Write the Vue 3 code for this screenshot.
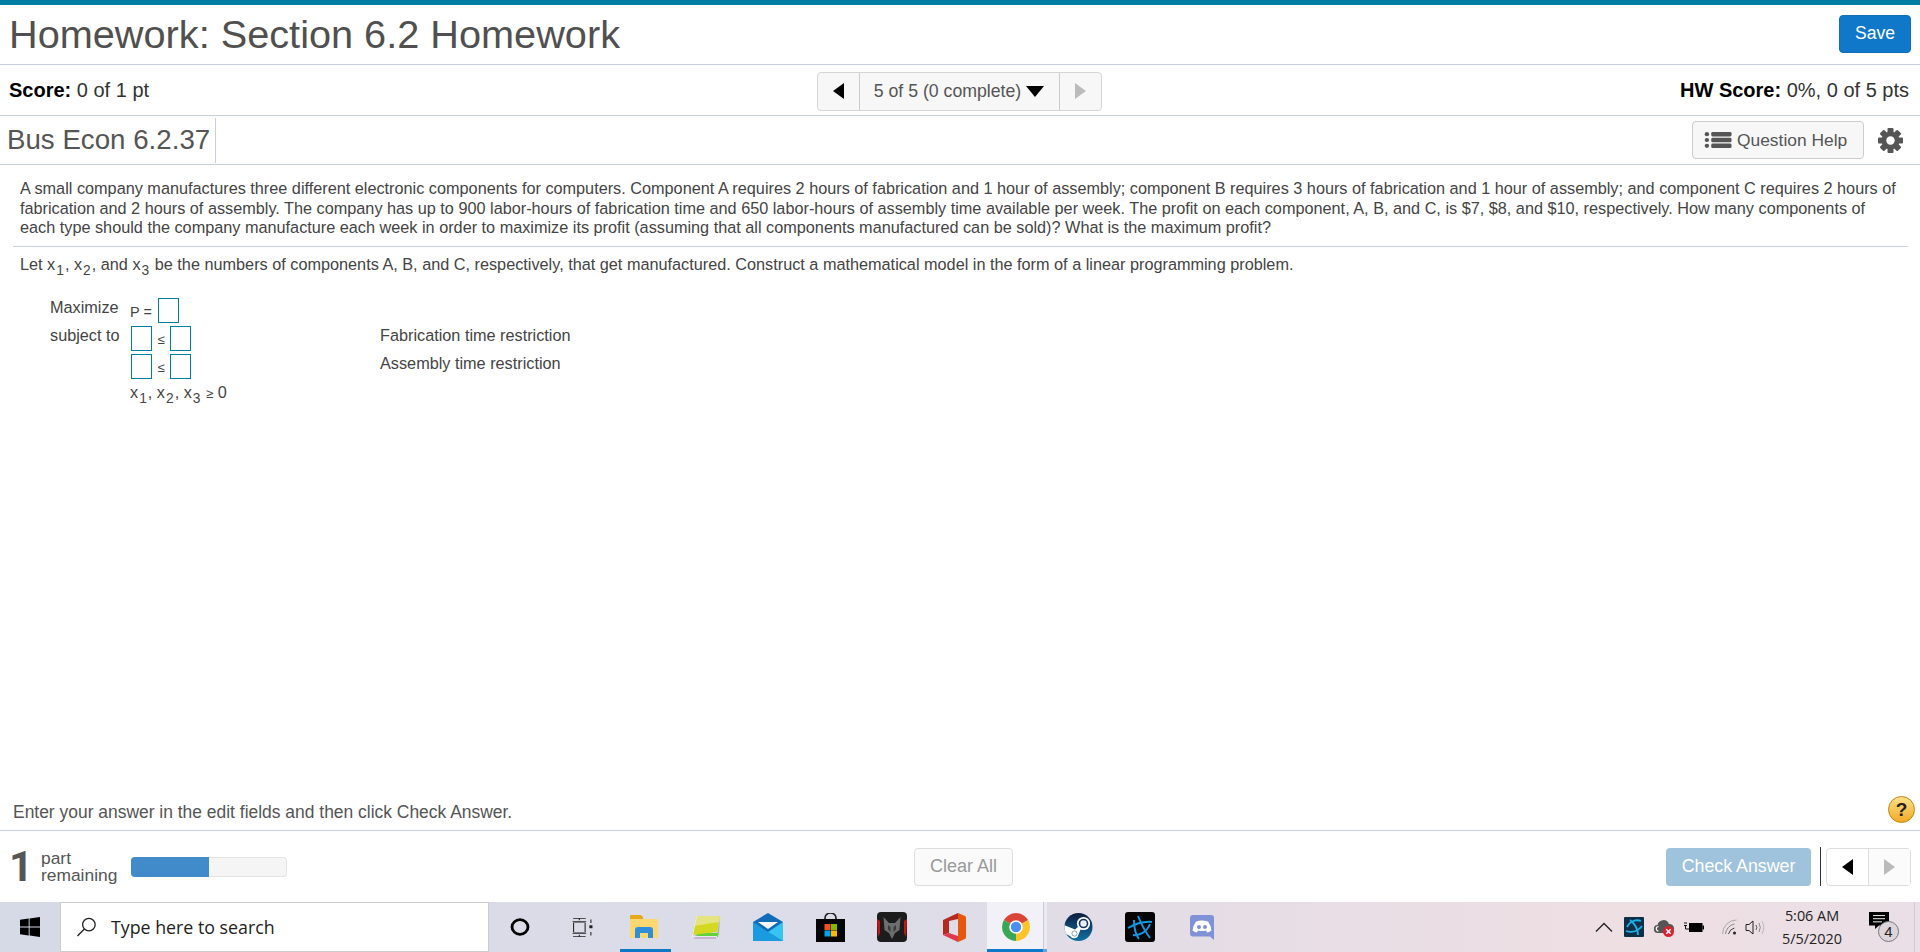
<script setup>
const problem = "A small company manufactures three different electronic components for computers. Component A requires 2 hours of fabrication and 1 hour of assembly; component B requires 3 hours of fabrication and 1 hour of assembly; and component C requires 2 hours of fabrication and 2 hours of assembly. The company has up to 900 labor-hours of fabrication time and 650 labor-hours of assembly time available per week. The profit on each component, A, B, and C, is $7, $8, and $10, respectively. How many components of each type should the company manufacture each week in order to maximize its profit (assuming that all components manufactured can be sold)? What is the maximum profit?";
</script>

<template>
  <div class="page">
    <header class="title-row">
      <h1>Homework: Section 6.2 Homework</h1>
      <button class="save">Save</button>
    </header>

    <div class="score-row">
      <div><b>Score:</b> 0 of 1 pt</div>
      <div class="pager">
        <span class="pager__arrow"><i class="tri tri--left"></i></span>
        <span class="pager__mid">5 of 5 (0 complete) <i class="tri tri--down"></i></span>
        <span class="pager__arrow"><i class="tri tri--right tri--off"></i></span>
      </div>
      <div class="score-row__right"><b>HW Score:</b> 0%, 0 of 5 pts</div>
    </div>

    <div class="question-row">
      <div class="question-row__name">Bus Econ 6.2.37</div>
      <button class="help-btn">
        <svg width="28" height="18" viewBox="0 0 29 20" preserveAspectRatio="none" fill="#555">
          <circle cx="3" cy="3.5" r="2.3" /><circle cx="3" cy="10" r="2.3" /><circle cx="3" cy="16.5" r="2.3" />
          <rect x="7.5" y="1" width="21" height="5" rx="1.5" /><rect x="7.5" y="7.5" width="21" height="5" rx="1.5" /><rect x="7.5" y="14" width="21" height="5" rx="1.5" />
        </svg>
        Question Help
      </button>
      <svg class="gear" width="25" height="25" viewBox="0 0 25 25">
        <g fill="#555">
          <rect x="9.5" y="0" width="6" height="25" rx="1" />
          <rect x="9.5" y="0" width="6" height="25" rx="1" transform="rotate(45 12.5 12.5)" />
          <rect x="9.5" y="0" width="6" height="25" rx="1" transform="rotate(90 12.5 12.5)" />
          <rect x="9.5" y="0" width="6" height="25" rx="1" transform="rotate(135 12.5 12.5)" />
          <circle cx="12.5" cy="12.5" r="9" />
        </g>
        <circle cx="12.5" cy="12.5" r="4.2" fill="#fff" />
      </svg>
    </div>

    <main class="body">
      <p class="problem">{{ problem }}</p>
      <hr class="rule" />
      <p class="let">Let x<sub>1</sub>, x<sub>2</sub>, and x<sub>3</sub> be the numbers of components A, B, and C, respectively, that get manufactured. Construct a mathematical model in the form of a linear programming problem.</p>
      <div class="model">
        <span>Maximize</span>
        <span class="expr"><span class="expr__p">P =</span><i class="box"></i></span>
        <span></span>
        <span>subject to</span>
        <span class="expr"><i class="box"></i><small>≤</small><i class="box"></i></span>
        <span>Fabrication time restriction</span>
        <span></span>
        <span class="expr"><i class="box"></i><small>≤</small><i class="box"></i></span>
        <span>Assembly time restriction</span>
        <span></span>
        <span class="vars">x<sub>1</sub>, x<sub>2</sub>, x<sub>3</sub> <small>≥</small> 0</span>
        <span></span>
      </div>
    </main>

    <div class="hint-row">
      <span>Enter your answer in the edit fields and then click Check Answer.</span>
      <span class="qmark">?</span>
    </div>

    <div class="action-row">
      <span class="count">1</span>
      <span class="count-label">part<br />remaining</span>
      <div class="progress"><div class="progress__bar" :style="{ width: '50%' }"></div></div>
      <button class="clear">Clear All</button>
      <button class="check">Check Answer</button>
      <span class="sep"></span>
      <div class="mini-pager">
        <span><i class="tri tri--left"></i></span>
        <span><i class="tri tri--right tri--off"></i></span>
      </div>
    </div>

    <footer class="taskbar">
      <div class="start">
        <svg width="20" height="20" viewBox="0 0 20 20" fill="#000">
          <path d="M0 2.8 8.7 1.6V9.5H0zM9.6 1.5 20 0V9.5H9.6zM0 10.5H8.7V18.4L0 17.2zM9.6 10.5H20V20L9.6 18.5z" />
        </svg>
      </div>
      <div class="search">
        <svg width="21" height="20" viewBox="0 0 21 21" fill="none" stroke="#222" stroke-width="1.4">
          <circle cx="13" cy="8" r="6.6" /><path d="M8.3 12.7 1 20" />
        </svg>
        <span>Type here to search</span>
      </div>
      <div class="slot">
        <svg width="20" height="18" viewBox="0 0 20 20" preserveAspectRatio="none"><ellipse cx="10" cy="10" rx="8" ry="8.2" fill="none" stroke="#000" stroke-width="2.8" /></svg>
      </div>
      <div class="slot">
        <svg width="21" height="19" viewBox="0 0 20 26" preserveAspectRatio="none" fill="none" stroke="#222" stroke-width="1">
          <path d="M1 .5H13M1 25.500H13M7 .5V3M7 23V25.500M1.500 6.500H12.500V19.500H1.500zM.5 4.500H13.500M.5 21.500H13.500" />
          <path d="M18 2V7M18 19V24" /><rect x="16.500" y="10" width="3" height="4" fill="#222" stroke="none" />
        </svg>
      </div>
      <div class="slot slot--open">
        <svg width="28" height="24" viewBox="0 0 28 24">
          <path d="M0 1a1 1 0 0 1 1-1H11l2 2V6H0z" fill="#e8a81c" />
          <path d="M0 4H27a1 1 0 0 1 1 1V23H1a1 1 0 0 1-1-1z" fill="#fdd772" />
          <path d="M5 23V15a3 3 0 0 1 3-3H20a3 3 0 0 1 3 3V23H18V18H10V23z" fill="#2e8fd8" />
        </svg>
      </div>
      <div class="slot">
        <svg width="30" height="24" viewBox="0 0 30 24">
          <path d="M4 20H28L29 1 25 24H3z" fill="#c8b4d2" />
          <path d="M6 18H27L29 6 27 22H5z" fill="#5fd23c" />
          <path d="M5 1H29L26 17 1 20z" fill="#d4d81e" />
          <path d="M5 1H29L28 7 3 11z" fill="#e4e480" />
          <path d="M1 20 5 1H6L2 21H26L27 17 26 22H1z" fill="#e8e8ec" />
        </svg>
      </div>
      <div class="slot">
        <svg width="30" height="28" viewBox="0 0 30 28">
          <path d="M15 0 30 9V28H0V9z" fill="#0f6cb5" />
          <path d="M5 9H25L15 16z" fill="#f6f8fa" />
          <path d="M0 9 15 19 30 28H0z" fill="#1a9be0" />
          <path d="M30 9 15 19 30 28z" fill="#38c4f2" />
        </svg>
      </div>
      <div class="slot">
        <svg width="29" height="29" viewBox="0 0 29 29">
          <path d="M9 7V5a5.500 5 0 0 1 11 0V7" fill="none" stroke="#1c1c1c" stroke-width="1.600" />
          <rect y="6" width="29" height="23" fill="#060606" />
          <rect x="8.500" y="11" width="6" height="6" fill="#f25022" />
          <rect x="15" y="11" width="6" height="6" fill="#7fba00" />
          <rect x="8.500" y="17.500" width="6" height="6" fill="#00a4ef" />
          <rect x="15" y="17.500" width="6" height="6" fill="#ffb900" />
        </svg>
      </div>
      <div class="slot">
        <svg width="30" height="30" viewBox="0 0 30 30">
          <rect width="30" height="30" rx="4" fill="#1c1c1c" />
          <path d="M0 7 3 9V21L1 25zM30 7 27 9V21L29 25z" fill="#c01818" />
          <path d="M6.500 5 12 11H18L23.500 5 22.500 18 18 21 15 27 12 21 7.500 18z" fill="#6e6e6e" />
          <path d="M11 13 13.500 15V20L11 17.500zM19 13 16.500 15V20L19 17.500z" fill="#3c3c3c" />
        </svg>
      </div>
      <div class="slot">
        <svg width="23" height="29" viewBox="0 0 23 29">
          <path d="M15 0 22 3Q23 3.500 23 5V24Q23 25.500 22 26L15 29z" fill="#e5580c" />
          <path d="M0 7 15 0V6L6 8V20L0 22z" fill="#b42a1f" />
          <path d="M0 22 6 20 15 23V29z" fill="#de3a4c" />
        </svg>
      </div>
      <div class="slot slot--active">
        <svg width="28" height="28" viewBox="0 0 28 28">
          <path d="M14 14 26.100 7A14 14 0 0 0 1.900 7z" fill="#db4437" />
          <path d="M14 14 1.900 7A14 14 0 0 0 14 28z" fill="#3aa757" />
          <path d="M14 14 14 28A14 14 0 0 0 26.100 7z" fill="#fdc32b" />
          <circle cx="14" cy="14" r="6.800" fill="#fff" /><circle cx="14" cy="14" r="5.200" fill="#4d8ff0" />
        </svg>
      </div>
      <div class="slot">
        <svg width="29" height="28" viewBox="0 0 29 28">
          <defs>
            <linearGradient id="steam-bg" x1="0" y1="0" x2="0" y2="1">
              <stop offset="0" stop-color="#0e1d3d" /><stop offset="1" stop-color="#1170a6" />
            </linearGradient>
            <clipPath id="steam-clip"><circle cx="14.500" cy="14" r="14" /></clipPath>
          </defs>
          <circle cx="14.500" cy="14" r="14" fill="url(#steam-bg)" />
          <g clip-path="url(#steam-clip)">
            <path d="M0 12 11 16.500 15 13 17 15.500 13.500 24A5 5 0 0 1 6 23L0 20z" fill="#fff" />
            <circle cx="19.500" cy="10.500" r="6.600" fill="#fff" />
            <circle cx="19.500" cy="10.500" r="4.800" fill="#12365f" />
            <circle cx="19.500" cy="10.500" r="3.200" fill="#e8eef4" />
            <circle cx="10.500" cy="20.500" r="2.600" fill="none" stroke="#6d8aa6" stroke-width=".8" />
          </g>
        </svg>
      </div>
      <div class="slot">
        <svg width="30" height="30" viewBox="0 0 30 30">
          <rect width="30" height="30" rx="3" fill="#050505" />
          <g fill="none" stroke="#1098e2" stroke-width="2">
            <path d="M13 4C15 9 19 18 25 26" /><path d="M3 16C10 12 18 9 27 10" /><path d="M9 8C9 15 10 22 14 27" /><path d="M8 23C14 24 22 20 25 12" />
          </g>
        </svg>
      </div>
      <div class="slot">
        <svg width="24" height="25" viewBox="0 0 24 25">
          <path d="M3 0H21a3 3 0 0 1 3 3V25L20 21.500H3a3 3 0 0 1-3-3V3a3 3 0 0 1 3-3z" fill="#7f92d8" />
          <path d="M6 6.500Q12 4.500 18 6.500 21 10.500 21.500 15.500 19 17.500 17 17.500L16 15.500Q12 16.500 8 15.500L7 17.500Q5 17.500 2.500 15.500 3 10.500 6 6.500z" fill="#fff" />
          <circle cx="9" cy="12" r="2" fill="#7f92d8" /><circle cx="15" cy="12" r="2" fill="#7f92d8" />
        </svg>
      </div>

      <div class="tray">
        <svg class="tray__caret" width="18" height="10" viewBox="0 0 18 10"><path d="M1 9.500 9 1.500 17 9.500" fill="none" stroke="#222" stroke-width="1.300" /></svg>
        <svg class="tray__icon" width="20" height="20" viewBox="0 0 20 20">
          <rect width="20" height="20" rx="1" fill="#0d3048" />
          <g fill="none" stroke="#1eaee8" stroke-width="1.800"><path d="M3 10C6 4 12 2 17 4" /><path d="M6 3C11 7 14 12 14 18" /><path d="M2 14C8 16 14 14 18 9" /></g>
        </svg>
        <svg class="tray__icon" width="20" height="20" viewBox="0 0 20 20">
          <path d="M4 16a4 4 0 0 1-.5-8A6 6 0 0 1 15 7a4.500 4.500 0 0 1 1 9z" fill="#555" />
          <path d="M4.500 14a2 2 0 0 1 0-4.500" fill="none" stroke="#fff" stroke-width="1.200" />
          <circle cx="14.500" cy="14.500" r="5.500" fill="#d9232e" />
          <path d="M12.300 12.300 16.700 16.700M16.700 12.300 12.300 16.700" stroke="#fff" stroke-width="1.500" />
        </svg>
        <svg class="tray__icon" width="20" height="14" viewBox="0 0 20 14">
          <path d="M0 3H3M0 5.500H3M1.500 5.500V9H5" fill="none" stroke="#111" stroke-width="1" />
          <rect x="5" y="3" width="13.500" height="9" fill="#000" /><rect x="18.500" y="5.500" width="1.500" height="4" fill="#000" />
        </svg>
        <svg class="tray__wifi" width="17" height="16" viewBox="0 0 16 16" fill="none">
          <path d="M1 15A14 14 0 0 1 15 1" stroke="#aaa" /><path d="M4 15A11 11 0 0 1 13 5" stroke="#888" /><path d="M7 15A8 8 0 0 1 13 9" stroke="#444" />
          <circle cx="13" cy="14" r="1.500" fill="#222" />
        </svg>
        <svg class="tray__vol" width="20" height="15" viewBox="0 0 20 15" fill="none">
          <path d="M1 4.500H4L8 1V14L4 10.500H1z" stroke="#222" /><path d="M11 5Q12.500 7.500 11 10" stroke="#555" /><path d="M14 3Q16.500 7.500 14 12" stroke="#888" /><path d="M17 1Q20.500 7.500 17 14" stroke="#bbb" />
        </svg>
        <div class="clock">5:06 AM<br />5/5/2020</div>
        <div class="notif">
          <svg width="20" height="17" viewBox="0 0 20 19" preserveAspectRatio="none">
            <path d="M0 0H20V15H10L6 19V15H0z" fill="#000" /><path d="M4 4H16M4 7.500H16M4 11H13" stroke="#fff" />
          </svg>
          <span class="notif__badge">4</span>
        </div>
        <span class="show-desktop"></span>
      </div>
    </footer>
  </div>
</template>

<style scoped>
.page {
  height: 952px;
  display: flex;
  flex-direction: column;
  box-sizing: border-box;
  border-top: 5px solid #007fa3;
  font-family: "Liberation Sans", Arial, sans-serif;
  color: #555;
  background: #fff;
  overflow: hidden;
}
.title-row {
  height: 59px;
  flex: none;
  display: flex;
  justify-content: space-between;
  align-items: center;
  padding: 0 9px;
  border-bottom: 1px solid #c8d0de;
  box-sizing: content-box;
}
h1 {
  margin: -2px 0 0;
  font-size: 39.700px;
  font-weight: 400;
  line-height: 50px;
  color: #505050;
}
button {
  font-family: inherit;
  box-sizing: border-box;
  cursor: pointer;
}
.save {
  width: 72px;
  height: 38px;
  margin-top: -2px;
  border: 1px solid #0f6fb9;
  border-radius: 4px;
  background: #0f78c8;
  color: #fff;
  font-size: 17.600px;
}
.score-row {
  height: 50px;
  flex: none;
  display: grid;
  grid-template-columns: 1fr auto 1fr;
  align-items: center;
  padding: 0 11px 0 9px;
  border-bottom: 1px solid #c8d0de;
  font-size: 20px;
  color: #333;
}
.score-row b {
  color: #000;
}
.score-row__right {
  text-align: right;
}
.pager {
  display: flex;
  height: 39px;
  box-sizing: border-box;
  margin-top: 2px;
  border: 1px solid #d5d5d5;
  border-radius: 4px;
  background: #f7f7f7;
  color: #555;
  font-size: 17.700px;
}
.pager__arrow {
  width: 41px;
  display: flex;
  align-items: center;
  justify-content: center;
}
.pager__mid {
  width: 201px;
  box-sizing: border-box;
  display: flex;
  align-items: center;
  justify-content: center;
  gap: 5px;
  border-left: 1px solid #ccc;
  border-right: 1px solid #ccc;
}
.tri {
  display: block;
  width: 0;
  height: 0;
}
.tri--left {
  border-top: 8px solid transparent;
  border-bottom: 8px solid transparent;
  border-right: 11px solid #000;
}
.tri--right {
  border-top: 8px solid transparent;
  border-bottom: 8px solid transparent;
  border-left: 11px solid #000;
}
.tri--off {
  border-left-color: #bbb;
}
.tri--down {
  border-left: 9px solid transparent;
  border-right: 9px solid transparent;
  border-top: 11px solid #000;
}
.question-row {
  height: 48px;
  flex: none;
  display: flex;
  align-items: center;
  padding-left: 7px;
  border-bottom: 1px solid #c8d0de;
}
.question-row__name {
  height: 45px;
  width: 209px;
  box-sizing: border-box;
  border-right: 1px solid #c8d0de;
  font-size: 27.700px;
  line-height: 44px;
  color: #555;
}
.help-btn {
  margin-left: auto;
  width: 172px;
  height: 38px;
  display: flex;
  align-items: center;
  gap: 5px;
  padding: 0 0 0 11px;
  border: 1px solid #ccc;
  border-radius: 4px;
  background: #f7f7f7;
  color: #555;
  font-size: 17.400px;
}
.gear {
  margin: 0 17px 0 14px;
}
.body {
  flex: 1;
  padding: 14px 12px 0 13px;
  font-size: 16.250px;
  color: #444;
  min-height: 0;
}
.problem {
  margin: 0;
  padding: 0 8px 0 7px;
  line-height: 19.500px;
}
.rule {
  margin: 8px 0 0;
  border: 0;
  border-top: 1px solid #c8d0de;
}
.let {
  margin: 8px 0 0;
  padding-left: 7px;
  line-height: 19.500px;
  height: 43px;
}
sub {
  margin: 0 1px 0 1px;
  font-size: 85%;
  line-height: 0;
  vertical-align: -5px;
}
.model {
  display: grid;
  grid-template-columns: 81px 249px 1fr;
  grid-auto-rows: 28px;
  padding-left: 37px;
  line-height: 18px;
}
.expr {
  display: flex;
  align-items: flex-start;
}
.expr__p {
  width: 28px;
  margin-left: -1px;
  font-size: 14.500px;
  line-height: 28px;
}
.expr small {
  width: 18px;
  text-align: center;
  font-size: 13px;
  line-height: 28px;
}
.vars {
  margin-left: -1px;
  line-height: 20px;
  white-space: nowrap;
}
.vars small {
  font-size: 13px;
}
.box {
  display: block;
  width: 21px;
  height: 25px;
  box-sizing: border-box;
  border: 1px solid #007fa3;
  background: #fff;
}
.hint-row {
  height: 35px;
  flex: none;
  display: flex;
  justify-content: space-between;
  align-items: center;
  padding: 5px 5px 0 13px;
  border-bottom: 1px solid #c8d0de;
  font-size: 17.450px;
  box-sizing: content-box;
}
.qmark {
  width: 27px;
  height: 27px;
  margin-top: -6px;
  border-radius: 50%;
  box-sizing: border-box;
  border: 1px solid #b8860b;
  background: linear-gradient(#fde08a, #f2ab25);
  color: #222;
  font-size: 19px;
  font-weight: 700;
  line-height: 25px;
  text-align: center;
}
.action-row {
  height: 71px;
  flex: none;
  display: flex;
  align-items: center;
  padding: 0 9px 0 11px;
  box-sizing: border-box;
}
.count {
  width: 30px;
  margin-left: -2px;
  margin-right: 2px;
  font-family: Roboto, "Liberation Sans", sans-serif;
  font-size: 42px;
  font-weight: 700;
  line-height: 42px;
  color: #555;
}
.count-label {
  width: 90px;
  font-size: 17.400px;
  line-height: 17px;
}
.progress {
  width: 156px;
  height: 20px;
  box-sizing: border-box;
  border-radius: 4px;
  background: #f5f5f5;
  box-shadow: inset 0 0 0 1px #e4e4e4;
  overflow: hidden;
}
.progress__bar {
  height: 100%;
  background: #428bca;
}
.clear {
  width: 99px;
  height: 38px;
  margin-left: 627px;
  border: 1px solid #ddd;
  border-radius: 4px;
  background: #fafafa;
  color: #999;
  font-size: 18px;
}
.check {
  width: 145px;
  height: 38px;
  margin-left: auto;
  border: 0;
  border-radius: 4px;
  background: #9fc3dd;
  color: #fff;
  font-size: 17.800px;
}
.sep {
  width: 1px;
  height: 39px;
  margin: 0 5px 0 9px;
  background: #333;
}
.mini-pager {
  width: 85px;
  height: 38px;
  box-sizing: border-box;
  display: flex;
  border: 1px solid #ddd;
  border-radius: 4px;
}
.mini-pager span {
  flex: 1;
  display: flex;
  align-items: center;
  justify-content: center;
}
.mini-pager span + span {
  border-left: 1px solid #ddd;
  background: #fbfbfb;
}
.taskbar {
  height: 50px;
  flex: none;
  display: flex;
  align-items: center;
  background: linear-gradient(90deg, #d6d9e6 0%, #dcdde8 45%, #e6dde5 65%, #eedfe3 85%, #eadfe6 100%);
}
.start {
  width: 60px;
  display: flex;
  justify-content: center;
}
.search {
  width: 429px;
  height: 50px;
  box-sizing: border-box;
  display: flex;
  align-items: center;
  gap: 14px;
  padding-left: 15px;
  border: 1px solid #ccc;
  background: #fff;
  font-family: "Open Sans", sans-serif;
  font-size: 17.800px;
  color: #222;
}
.slot {
  position: relative;
  width: 62px;
  height: 50px;
  display: flex;
  align-items: center;
  justify-content: center;
  box-sizing: border-box;
  flex: none;
}
.slot--open::after,
.slot--active::after {
  content: "";
  position: absolute;
  bottom: 0;
  height: 3px;
}
.slot--open::after {
  left: 7px;
  width: 51px;
  background: #0f78c8;
}
.slot--active::after {
  left: 2px;
  width: 60px;
  background: linear-gradient(90deg, #0f78c8 56px, #5fa3e0 56px);
}
.slot--active {
  background: linear-gradient(90deg, transparent 2px, #f1f1f7 2px, #f1f1f7 58px, #c8cad4 58px, #c8cad4 59px, #ebeaf2 59px);
}
.tray {
  margin-left: auto;
  display: flex;
  align-items: center;
  height: 50px;
  flex: none;
}
.tray__caret {
  margin-right: 11px;
}
.tray__icon {
  margin-right: 10px;
}
.tray__wifi {
  margin: 0 7px;
}
.clock {
  width: 100px;
  margin-left: -3px;
  text-align: center;
  font-family: "Open Sans", sans-serif;
  font-size: 14.400px;
  line-height: 23px;
  color: #222;
}
.notif {
  position: relative;
  width: 20px;
  height: 30px;
  margin-left: 7px;
  box-sizing: border-box;
}
.notif__badge {
  position: absolute;
  left: 9px;
  top: 9px;
  width: 19px;
  height: 19px;
  border-radius: 50%;
  border: 1px solid #777;
  background: #dcd6dc;
  color: #222;
  font-size: 15px;
  line-height: 19px;
  text-align: center;
}
.show-desktop {
  width: 1px;
  height: 50px;
  margin-left: 25px;
  margin-right: 5px;
  background: #cfcad2;
}
</style>

<style>
body {
  margin: 0;
}
</style>
